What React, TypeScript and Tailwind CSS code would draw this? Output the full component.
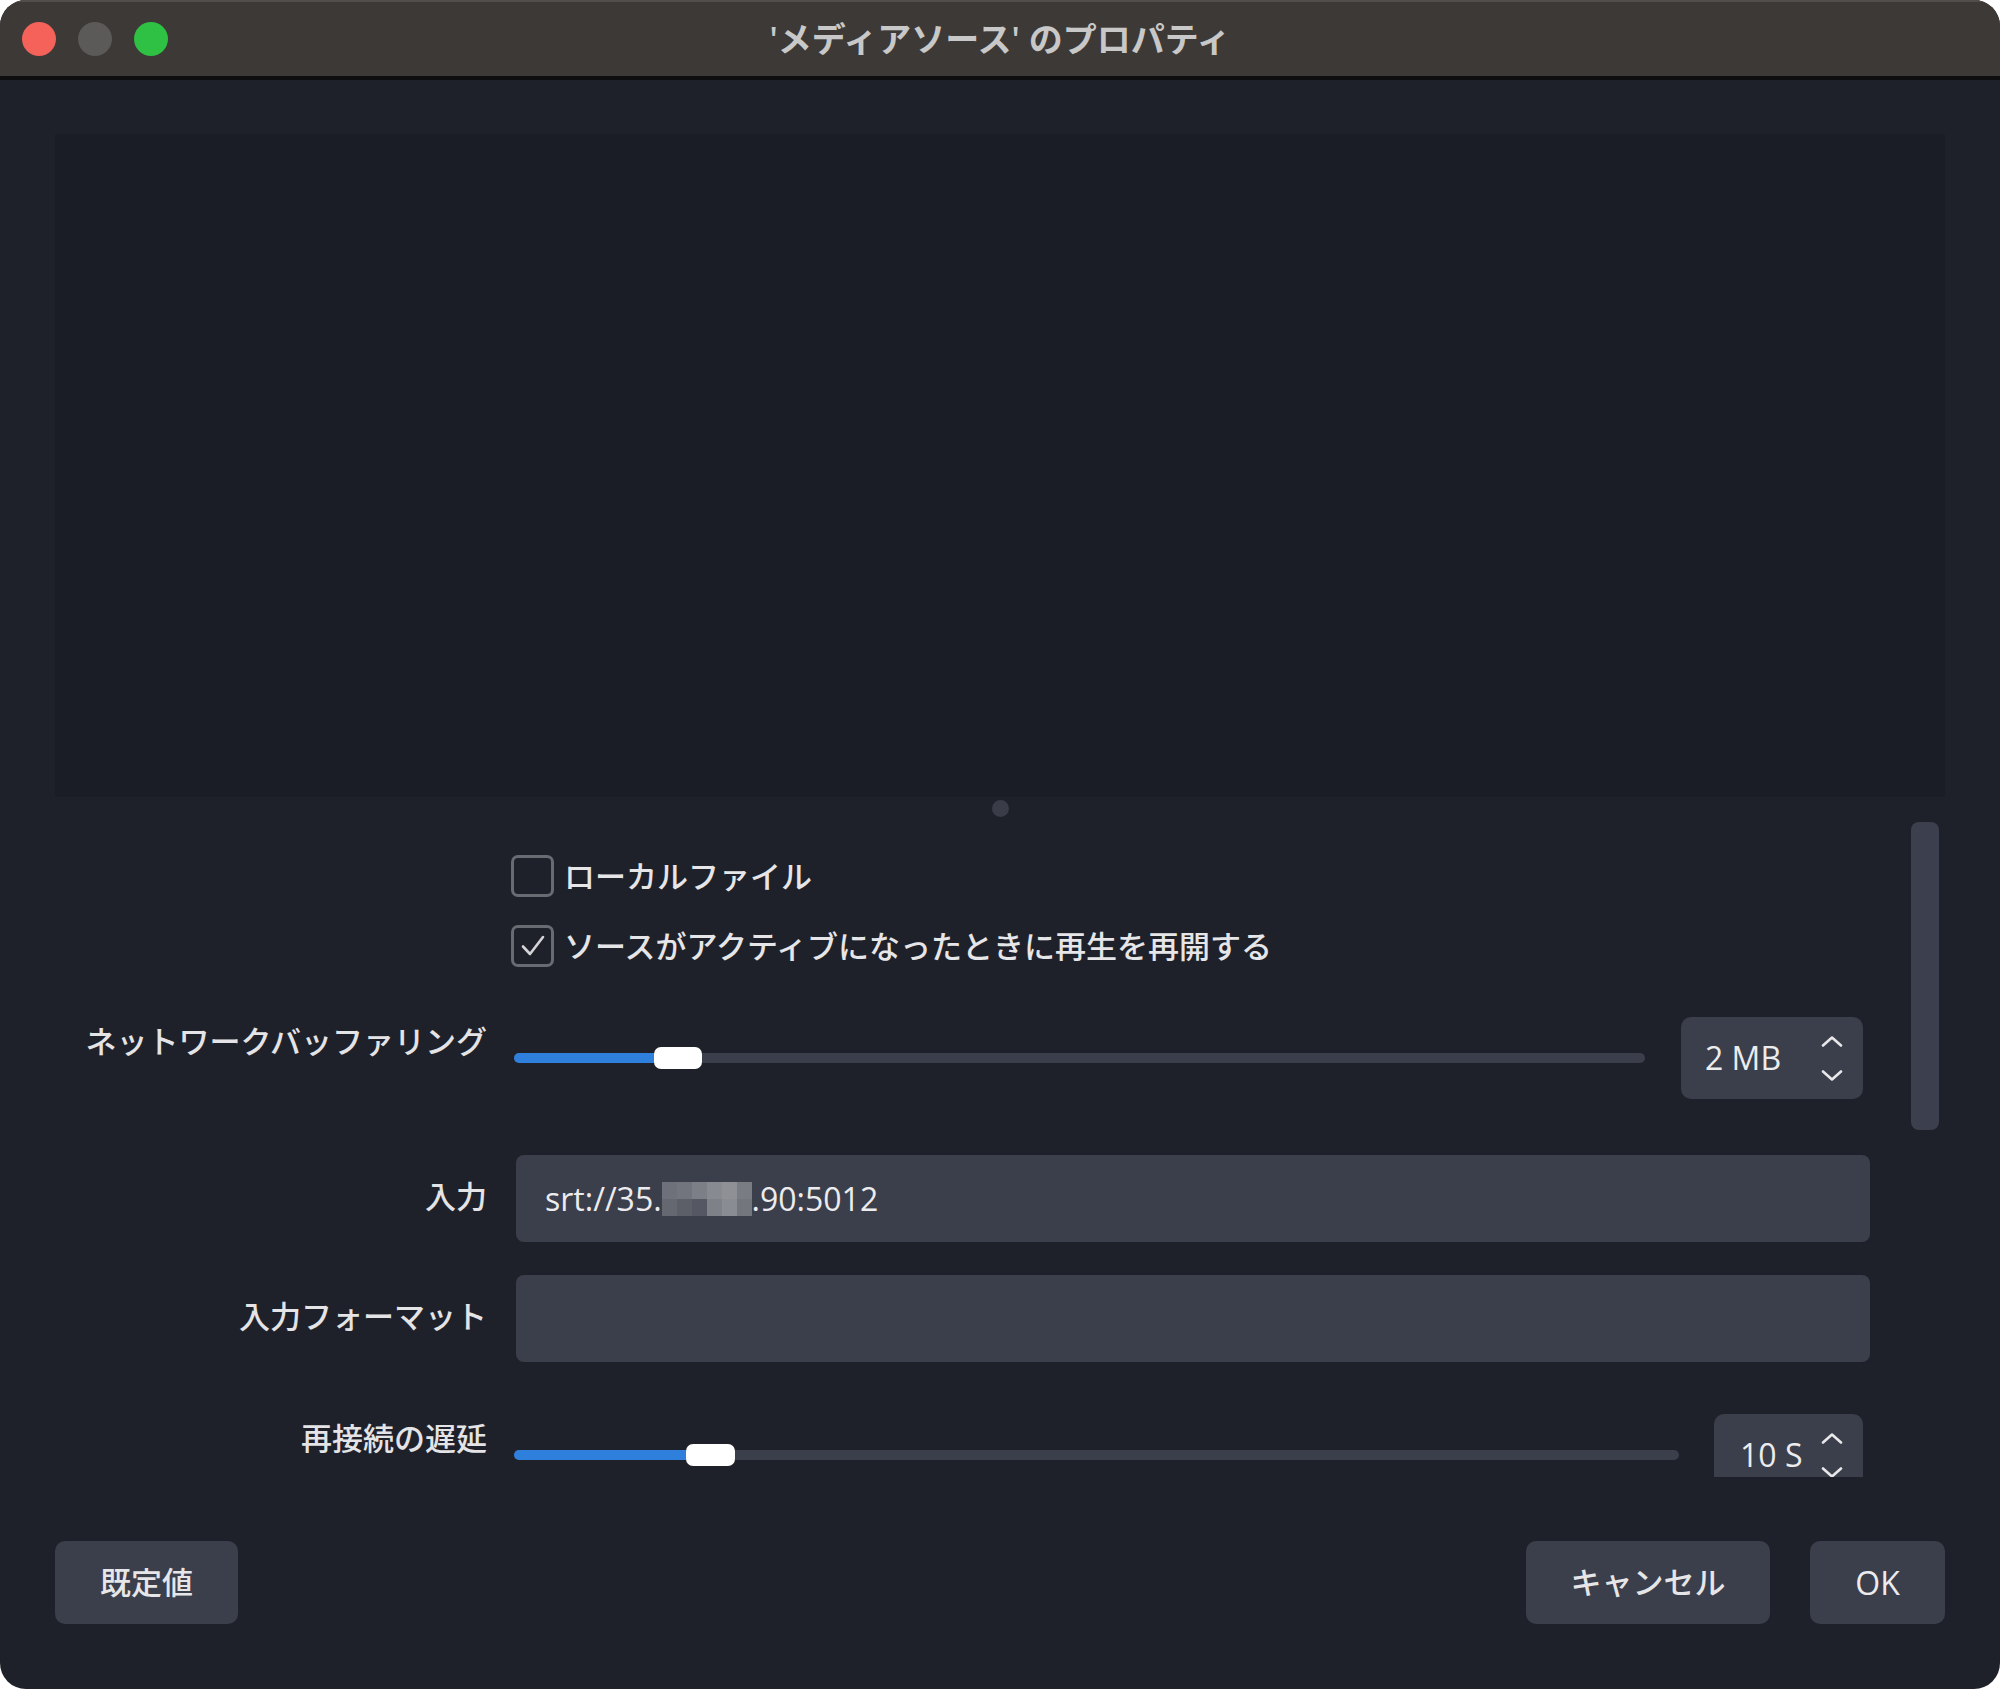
import React from "react";

function Chevrons() {
  return (
    <div className="flex flex-col items-center gap-[23px]">
      <svg width="22" height="11" viewBox="0 0 22 11" fill="none">
        <path d="M2 9.5 L11 1.5 L20 9.5" stroke="#e8e8ea" strokeWidth="2.6" strokeLinecap="round" strokeLinejoin="round" />
      </svg>
      <svg width="22" height="11" viewBox="0 0 22 11" fill="none">
        <path d="M2 1.5 L11 9.5 L20 1.5" stroke="#e8e8ea" strokeWidth="2.6" strokeLinecap="round" strokeLinejoin="round" />
      </svg>
    </div>
  );
}

function Checkbox({ checked, label }: { checked?: boolean; label: string }) {
  return (
    <div className="flex items-center">
      <div className="w-[432px] mr-[24px]" />
      <div className="w-[43px] h-[42px] rounded-[7px] border-[3px] border-[#696b73] flex items-center justify-center">
        {checked && (
          <svg width="30" height="30" viewBox="0 0 30 30" fill="none">
            <path d="M5 15.5 L12 23 L25 6" stroke="#d4d4d8" strokeWidth="2.6" strokeLinecap="round" strokeLinejoin="round" />
          </svg>
        )}
      </div>
      <span className="ml-[10px] text-[31px] leading-[36px] font-medium text-[#e6e6e9]">{label}</span>
    </div>
  );
}

function Label({ text, top }: { text: string; top?: boolean }) {
  return (
    <div
      className={
        top
          ? "w-[432px] shrink-0 text-right text-[31px] leading-[36px] font-medium text-[#e4e4e7] mt-[6px]"
          : "w-[432px] shrink-0 text-right text-[31px] leading-[36px] font-medium text-[#e4e4e7] -mt-[6px]"
      }
    >
      {text}
    </div>
  );
}

function Blurred() {
  const cells = [
    "bg-[#6f717a]", "bg-[#73757e]", "bg-[#7d7f87]", "bg-[#888a91]", "bg-[#8e9096]", "bg-[#7a7c84]",
    "bg-[#666871]", "bg-[#5c5e68]", "bg-[#555762]", "bg-[#7f8189]", "bg-[#8a8c93]", "bg-[#74767e]",
  ];
  return (
    <div className="grid grid-cols-6 grid-rows-2 w-[90px] h-[34px] shrink-0">
      {cells.map((c, i) => (
        <div key={i} className={c} />
      ))}
    </div>
  );
}

export default function App() {
  return (
    <div className="w-[2000px] h-[1689px] bg-white font-['Open_Sans','Noto_Sans_CJK_JP',sans-serif]">
      <div className="h-full flex flex-col rounded-[26px] overflow-hidden bg-[#1f212a]">
        {/* title bar */}
        <div className="h-[80px] shrink-0 grid grid-cols-[1fr_auto_1fr] items-center bg-[#3d3937] border-t-[2px] border-[#524e4c] border-b-[4px] border-b-[#0e0e10]">
          <div className="flex items-center gap-[22px] pl-[22px]">
            <div className="w-[34px] h-[34px] rounded-full bg-[#f4625a]" />
            <div className="w-[34px] h-[34px] rounded-full bg-[#5c5959]" />
            <div className="w-[34px] h-[34px] rounded-full bg-[#2ec144]" />
          </div>
          <div className="text-[34px] font-semibold text-[#c8c8c8] leading-none">'メディアソース' のプロパティ</div>
          <div />
        </div>

        <div className="flex-1 flex flex-col px-[55px] pt-[54px]">
          {/* preview */}
          <div className="h-[663px] shrink-0 bg-[#1a1c26]" />
          <div className="flex justify-center mt-[3px]">
            <div className="w-[17px] h-[17px] rounded-full bg-[#3a3c47]" />
          </div>

          {/* properties */}
          <div className="mt-[5px] h-[655px] shrink-0 flex overflow-hidden">
            <div className="w-[1815px] flex flex-col pt-[33px]">
              <Checkbox label="ローカルファイル" />
              <div className="mt-[28px]">
                <Checkbox checked label="ソースがアクティブになったときに再生を再開する" />
              </div>

              {/* network buffering */}
              <div className="mt-[50px] flex items-start">
                <Label text="ネットワークバッファリング" top />
                <div className="ml-[27px] flex-1 h-[82px] relative flex items-center">
                  <div className="w-full h-[10px] rounded-full bg-[#3b3e4b]">
                    <div className="w-[150px] h-full rounded-full bg-[#2f7fdc]" />
                  </div>
                  <div className="absolute left-[140px] top-[30px] w-[48px] h-[22px] rounded-[7px] bg-white" />
                </div>
                <div className="ml-[36px] mr-[7px] w-[182px] h-[82px] rounded-[10px] bg-[#3b3e4b] flex items-center justify-between pl-[24px] pr-[20px]">
                  <span className="text-[32px] font-medium text-[#ececee]">2 MB</span>
                  <Chevrons />
                </div>
              </div>

              {/* input */}
              <div className="mt-[56px] flex items-center">
                <Label text="入力" />
                <div className="ml-[29px] flex-1 h-[87px] rounded-[8px] bg-[#3b3e4b] flex items-center px-[29px] text-[32px] font-medium text-[#ececee]">
                  <span>srt://35.</span>
                  <Blurred />
                  <span>.90:5012</span>
                </div>
              </div>

              {/* input format */}
              <div className="mt-[33px] flex items-center">
                <Label text="入力フォーマット" />
                <div className="ml-[29px] flex-1 h-[87px] rounded-[8px] bg-[#3b3e4b]" />
              </div>

              {/* reconnect delay */}
              <div className="mt-[52px] flex items-start">
                <Label text="再接続の遅延" top />
                <div className="ml-[27px] flex-1 h-[82px] relative flex items-center">
                  <div className="w-full h-[10px] rounded-full bg-[#3b3e4b]">
                    <div className="w-[182px] h-full rounded-full bg-[#2f7fdc]" />
                  </div>
                  <div className="absolute left-[172px] top-[30px] w-[49px] h-[22px] rounded-[7px] bg-white" />
                </div>
                <div className="ml-[35px] mr-[7px] w-[149px] h-[82px] shrink-0 rounded-[10px] bg-[#3b3e4b] flex items-center justify-between pl-[26px] pr-[20px]">
                  <span className="text-[32px] font-medium text-[#ececee]">10 S</span>
                  <Chevrons />
                </div>
              </div>
            </div>
            <div className="ml-[41px] w-[28px] h-[308px] rounded-[8px] bg-[#3c3f4d]" />
          </div>

          {/* buttons */}
          <div className="mt-[64px] flex items-center">
            <button className="w-[183px] h-[83px] rounded-[10px] bg-[#3b3e4b] text-[31px] font-medium text-[#e6e6e8]">既定値</button>
            <div className="flex-1" />
            <button className="w-[244px] h-[83px] rounded-[10px] bg-[#3b3e4b] text-[31px] font-medium text-[#e6e6e8]">キャンセル</button>
            <button className="ml-[40px] w-[135px] h-[83px] rounded-[10px] bg-[#3b3e4b] text-[32px] font-medium text-[#ececee]">OK</button>
          </div>
        </div>
      </div>
    </div>
  );
}
